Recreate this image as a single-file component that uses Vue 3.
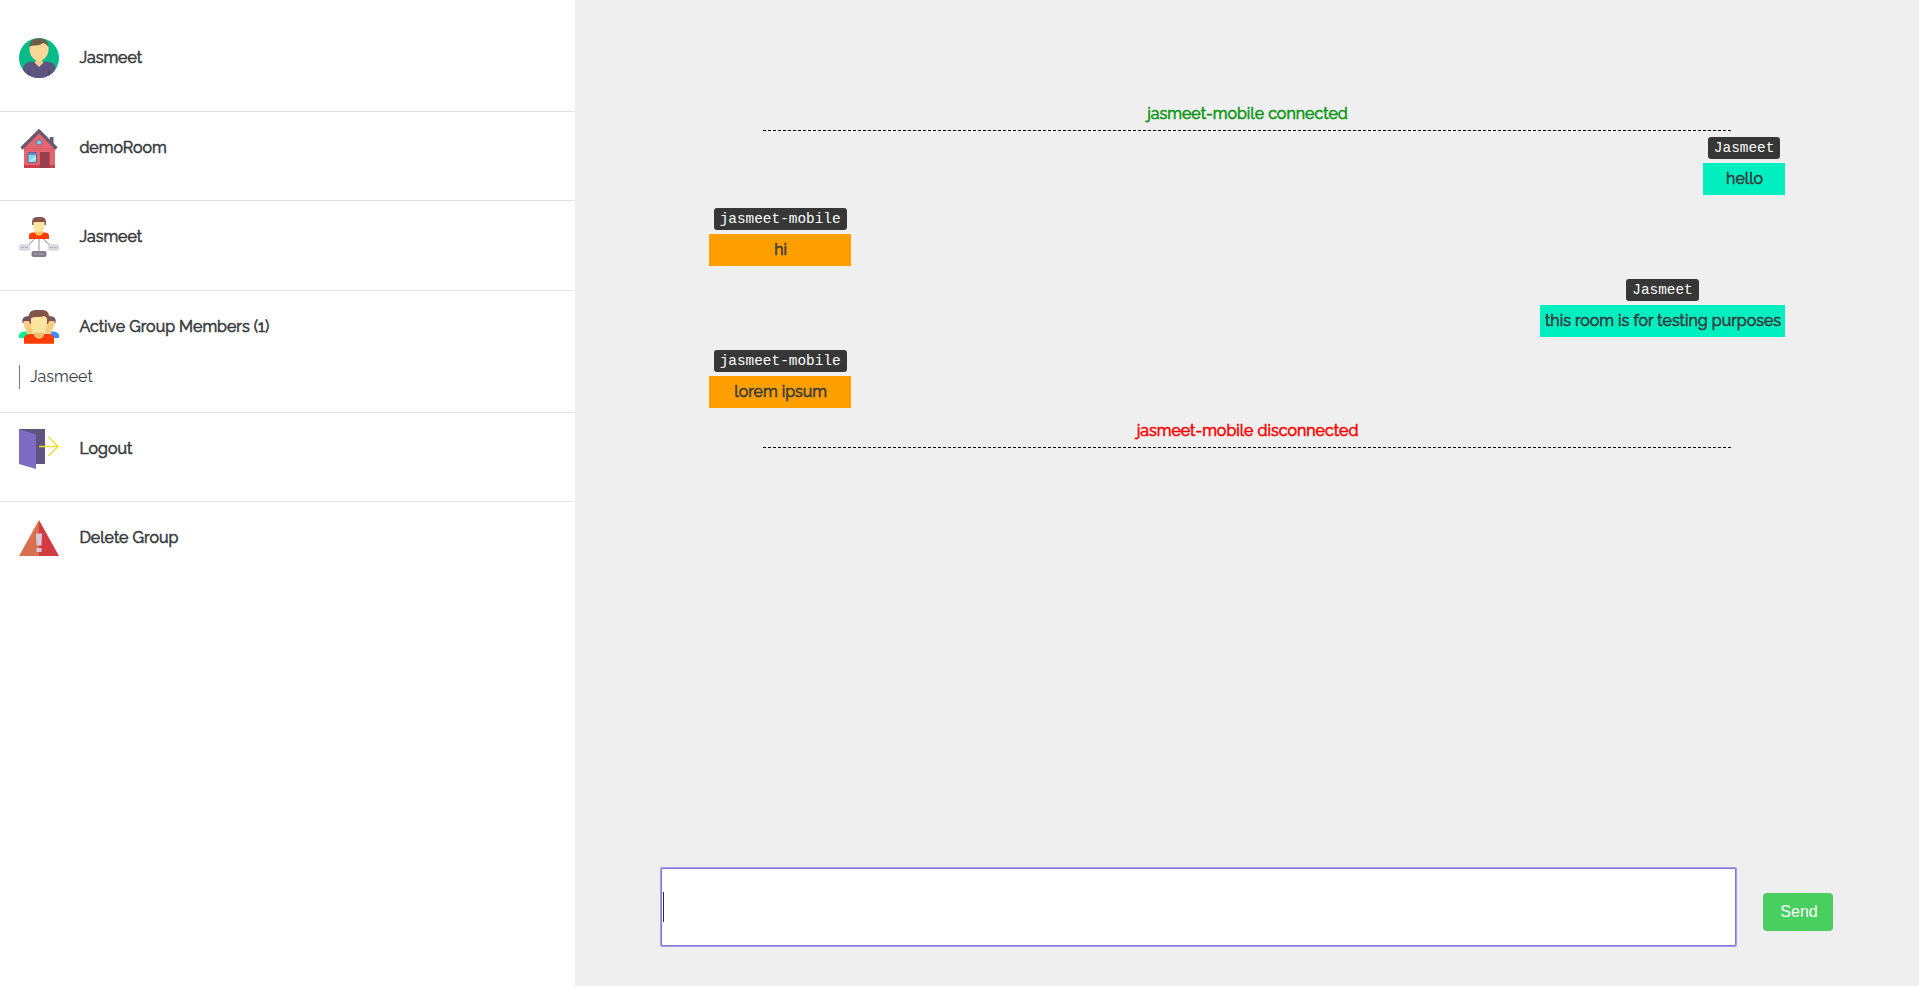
<script setup>
const notices = {
  joined: 'jasmeet-mobile connected',
  left: 'jasmeet-mobile disconnected',
}
const messages = [
  { from: 'Jasmeet', text: 'hello', mine: true },
  { from: 'jasmeet-mobile', text: 'hi', mine: false },
  { from: 'Jasmeet', text: 'this room is for testing purposes', mine: true },
  { from: 'jasmeet-mobile', text: 'lorem ipsum', mine: false },
]
</script>

<template>
  <div class="app">
    <aside class="sidebar">
      <section class="row first">
        <div class="head">
          <svg class="icon" viewBox="0 0 40 40">
            <clipPath id="avatar"><circle cx="20" cy="20" r="20" /></clipPath>
            <g clip-path="url(#avatar)">
              <rect width="40" height="40" fill="#05bc8a" />
              <path d="M2 40 L5 27 Q7 24.500 11 24 L15 23.500 Q20 30 25 23.500 L30 24 Q34 24.500 36 28 L38 40Z" fill="#5d5480" />
              <path d="M17 19 H23 V23 L24.500 24.500 L20 29 L15.500 24.500 L17 23Z" fill="#f3ce90" />
              <path d="M10.500 8 Q12 4 20 4 Q28 4 29.500 8 V12 C29.500 17 25 23 20 23 C15 23 10.500 17 10.500 12Z" fill="#f8d797" />
              <path d="M10.500 9 C10 3 15 0 20 0 C25 0 29.500 3 29.500 9 Q28 6 24 5 Q20 8 16 7.500 Q12 7 10.500 9Z" fill="#6d5e4b" />
              <path d="M9.500 33 V40 M30.500 33 V40" stroke="#494168" stroke-width="1.200" />
            </g>
          </svg>
          <span class="label">Jasmeet</span>
        </div>
      </section>

      <section class="row">
        <div class="head">
          <svg class="icon" viewBox="0 0 40 40">
            <path d="M31 9 H34.500 V19 H31Z" fill="#67596e" />
            <path d="M20 3 L36 18.500 V40 H5 V18.500Z" fill="#e5646e" />
            <path d="M5 20.500 H36" stroke="#cf5964" stroke-width=".7" />
            <path d="M5 37 H36 V40 H5Z" fill="#c9414f" />
            <path d="M21 24 H30.500 V40 H21Z" fill="#963e4e" />
            <path d="M2.500 20.500 L20 3 L37.500 20.500" fill="none" stroke="#67596e" stroke-width="3.200" />
            <circle cx="20" cy="14.500" r="2.500" fill="#7bd0f4" stroke="#5b7fac" stroke-width="1" />
            <path d="M9 24.500 H17.500 V34.500 H9Z" fill="#7bdcf4" stroke="#6c6587" stroke-width="1" />
            <path d="M9 25 H17.500 V27 H9Z" fill="#6688bd" />
            <path d="M10 33.500 L17 28 V31 L14 33.500Z" fill="#b0edf9" />
          </svg>
          <span class="label">demoRoom</span>
        </div>
      </section>

      <section class="row tall">
        <div class="head">
          <svg class="icon" viewBox="0 0 40 40">
            <path d="M20 21 V35 M16 21.500 L9 28.500 M24 21.500 L31 28.500" fill="none" stroke="#b9b9c4" stroke-width="1.500" />
            <path d="M10 22 V19 Q10 15.500 14 15.500 H26 Q30 15.500 30 19 V22Z" fill="#ff3d00" />
            <path d="M16 14 H24 V16.500 Q20 21 16 16.500Z" fill="#ffbc69" />
            <path d="M13.200 8 Q12 0 18 0 H23 Q28 1 26.800 8Z" fill="#865349" />
            <path d="M14.500 5 H25.500 V10 Q25 15 20 15 Q15 15 14.500 10Z" fill="#fde4a0" />
            <rect x="0" y="27.300" width="11" height="6.500" rx="2" fill="#d7dae2" />
            <rect x="29" y="27.300" width="11" height="6.500" rx="2" fill="#d7dae2" />
            <rect x="12.500" y="34" width="15" height="6" rx="2" fill="#837b8d" />
            <path d="M2 30.500 H5 M6 30.500 H9 M31 30.500 H34 M35 30.500 H38" stroke="#aeb2c1" />
            <path d="M15 37 H18 M19 37 H25" stroke="#b3acba" />
          </svg>
          <span class="label">Jasmeet</span>
        </div>
      </section>

      <section class="row members">
        <div class="head">
          <svg class="icon" viewBox="0 0 40 40">
            <path d="M0 31 V28 Q1 24.500 6 24.500 H14 V31Z" fill="#00f38c" />
            <path d="M40 31 V28 Q39 24.500 34 24.500 H26 V31Z" fill="#448aff" />
            <path d="M3.500 16 Q2 9 10 9 H15 V16Z" fill="#67516c" />
            <path d="M36.500 16 Q38 9 30 9 H25 V16Z" fill="#79545f" />
            <path d="M4.500 14 H14 V27 H8 L7 23 Q4.500 20 4.500 14Z M35.500 14 H26 V27 H32 L33 23 Q35.500 20 35.500 14Z" fill="#ffcc80" />
            <path d="M5 36.800 V31 Q5 27.500 11 27 H29 Q35 27.500 35 31 V36.800Z" fill="#ff3d00" />
            <path d="M15 25 H25 V29 Q20 35 15 29Z" fill="#ffbc69" />
            <path d="M10 14 Q8 3 17 3 H24 Q32 4 30 14 L29 17 H11Z" fill="#865349" />
            <path d="M12 12 Q12 10 17 10 Q24 10 25 9 Q28 10 28 12 V17 C28 23 25 26 20 26 C15 26 12 23 12 17Z" fill="#fde4a0" />
          </svg>
          <span class="label">Active Group Members (1)</span>
        </div>
        <div class="member">Jasmeet</div>
      </section>

      <section class="row">
        <div class="head">
          <svg class="icon" viewBox="0 0 40 40">
            <path d="M0 0 H26 V35 H0Z" fill="#5d5480" />
            <path d="M0 0 L17 5.500 V40 L0 35Z" fill="#7e6bc4" />
            <path d="M20 17.500 H39 M29.500 8 L39 17.500 L29.500 27" fill="none" stroke="#e7de38" stroke-width="1.500" />
          </svg>
          <span class="label">Logout</span>
        </div>
      </section>

      <section class="row last">
        <div class="head">
          <svg class="icon" viewBox="0 0 40 40">
            <path d="M20 2 V38 H0Z" fill="#d9704e" />
            <path d="M20 2 L40 38 H20Z" fill="#d33b43" />
            <path d="M17 15.500 H23 L22.500 27.500 H17.500Z M17.500 30 H22.500 V34 H17.500Z" fill="#d4c8dc" />
          </svg>
          <span class="label">Delete Group</span>
        </div>
      </section>
    </aside>

    <main class="chat">
      <div class="log">
        <p class="notice joined">{{ notices.joined }}</p>
        <div v-for="(m, i) in messages" :key="i" class="message" :class="{ mine: m.mine }">
          <span class="from">{{ m.from }}</span>
          <p class="bubble">{{ m.text }}</p>
        </div>
        <p class="notice gone">{{ notices.left }}</p>
      </div>
      <form class="composer" @submit.prevent>
        <div class="field"><i class="caret"></i></div>
        <button class="send" type="submit">Send</button>
      </form>
    </main>
  </div>
</template>

<style>
body { margin: 0; background: #fff; }
</style>

<style scoped>
.app {
  display: flex;
  height: 986px;
  overflow: hidden;
  font: 16px/24px Raleway, Lato, sans-serif;
  color: #373a3c;
}
.sidebar { width: 575px; flex: none; background: #fff; }
.row {
  box-sizing: border-box;
  height: 89px;
  padding: 16px 19px 0;
  border-bottom: 1px solid #e1e1e1;
}
.row.first { height: 112px; padding-top: 38px; }
.row.tall { height: 90px; }
.row.members { height: 122px; }
.row.last { border-bottom: 0; }
.head { display: flex; gap: 20px; height: 40px; }
.icon { width: 40px; height: 40px; flex: none; }
.label { padding: 8px 0 0 0.400px; }
.label, .notice, .bubble { -webkit-text-stroke: 0.600px currentColor; }
.member {
  width: 200px;
  height: 24px;
  margin-top: 18px;
  padding-left: 10px;
  border-left: 1px solid #777;
}
.chat {
  flex: 1;
  display: flex;
  flex-direction: column;
  justify-content: space-between;
  background: #efefef;
}
.log { width: 1076px; margin: 101px 0 0 134px; }
.notice {
  box-sizing: border-box;
  width: 968px;
  height: 30px;
  margin: 0 auto;
  padding: 1px 0 0 1px;
  border-bottom: 1px dashed #000;
  text-align: center;
}
.joined { color: #0b9613; margin-bottom: 6px; }
.gone { color: #f00; margin-top: -3px; }
.message {
  display: flex;
  flex-direction: column;
  align-items: center;
  width: fit-content;
  height: 71px;
}
.message.mine { margin-left: auto; }
.from {
  height: 22px;
  padding: 0 6px;
  margin: 0 4.700px 4px;
  border-radius: 3px;
  background: #373737;
  color: #fff;
  font: 14.400px/22px "Liberation Mono", monospace;
}
.bubble {
  box-sizing: border-box;
  width: 100%;
  height: 32px;
  margin: 0;
  padding: 4px 4px 4px 5px;
  background: #ffa000;
  text-align: center;
}
.mine .bubble { background: #00efc0; }
.composer { display: flex; padding: 0 0 40px 86px; }
.field {
  box-sizing: border-box;
  width: 1075px;
  height: 78px;
  display: flex;
  align-items: center;
  padding-left: 1px;
  border: 1px solid #8377d1;
  border-radius: 1px;
  box-shadow: 0 0 0 1px #a69bee;
  background: #fff;
}
.caret { width: 1px; height: 30px; background: #2c2c38; }
.send {
  width: 70px;
  height: 38px;
  margin: 25px 0 0 27px;
  padding: 0 0 0 2px;
  border: 0;
  border-radius: 4px;
  background: #48cf60;
  color: #fff;
  font: 16px/38px "Liberation Sans", sans-serif;
}
</style>
